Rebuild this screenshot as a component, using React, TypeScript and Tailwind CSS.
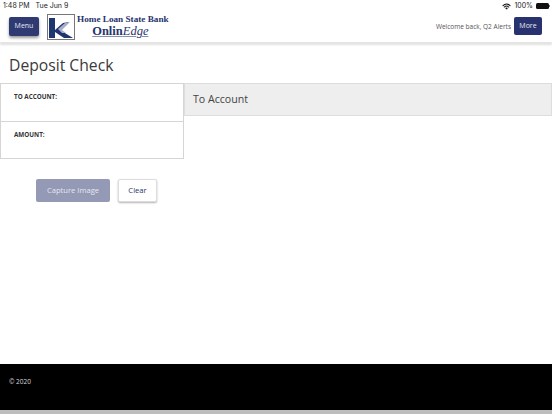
export default function App() {
  return (
    <div className="w-[552px] h-[414px] flex flex-col bg-white overflow-hidden text-[#333] font-['Open_Sans',sans-serif]">
      <div className="h-[11px] shrink-0 flex items-center justify-between pl-[3px] pr-[2px] pt-[1px] text-[7px] leading-[10px] text-[#222] font-['Inter',sans-serif]">
        <div className="flex gap-[6px]"><span>1:48 PM</span><span>Tue Jun 9</span></div>
        <div className="flex items-center gap-[2px]">
          <svg width="9" height="7" viewBox="0 0 20 16" fill="none" stroke="#111" strokeLinecap="round">
            <path d="M2 6 C6.5 1.5 13.5 1.5 18 6" strokeWidth="2.4" />
            <path d="M5 9.2 C8 6.5 12 6.5 15 9.2" strokeWidth="2.4" />
            <path d="M10 14 L7.8 11.8 C9 10.8 11 10.8 12.2 11.8 Z" fill="#111" strokeWidth="1" />
          </svg>
          <span className="ml-[1px]">100%</span>
          <div className="w-[13px] h-[6px] rounded-[1.5px] bg-[#111] ml-[1px]" />
          <div className="w-[1px] h-[2px] bg-[#777] -ml-[2px]" />
        </div>
      </div>
      <header className="h-[32px] shrink-0 flex items-center justify-between pl-[9px] pr-[10px] shadow-[0_2px_2px_rgba(0,0,0,0.12)] border-b border-[#e6e6e6] relative">
        <div className="flex items-center">
          <button className="w-[30px] h-[19px] rounded-[2px] bg-[#2f3a72] text-[#e8e9f2] text-[7px] shadow-[0_2px_3px_rgba(0,0,0,0.4)]">Menu</button>
          <div className="ml-[8px] w-[28px] h-[26px] border border-[#777] bg-white flex items-center justify-center">
            <svg width="26" height="24" viewBox="0 0 26 24">
              <rect x="1" y="3" width="6" height="20" fill="#1f3570" />
              <path d="M7 15 L15 8 L21 7 L12 15 L25 23 L16 23 L7 17 Z" fill="#1f3570" />
              <path d="M10 14 L17 8 L22 7 L14 15 L18 18 L14 18 Z" fill="#a8adc8" />
            </svg>
          </div>
          <div className="ml-[2px] flex flex-col items-center font-['Liberation_Serif',serif] text-[#27346c] -mt-[3px]">
            <span className="text-[9.2px] leading-[12px] font-bold whitespace-nowrap">Home Loan State Bank</span>
            <span className="text-[12.5px] leading-[13px] font-bold whitespace-nowrap -ml-[5px] underline decoration-[#8890b0] decoration-[0.5px]">Onlin<span className="italic font-normal">Edge</span></span>
          </div>
        </div>
        <div className="flex items-center gap-[3px]">
          <span className="text-[6.5px] text-[#555]">Welcome back, Q2 Alerts</span>
          <button className="w-[28px] h-[18px] -mt-[1px] rounded-[2px] bg-[#27326e] text-[#e8e9f2] text-[7px]">More</button>
        </div>
      </header>
      <main className="flex-1 min-h-0 flex flex-col">
        <h1 className="pl-[9px] mt-[10px] text-[15.7px] leading-[24px] text-[#3a3a3a]">Deposit Check</h1>
        <div className="mt-[6px] flex items-start">
          <div className="w-[184px] shrink-0">
            <div className="h-[39px] border border-[#d5d5d5] px-[13px] pt-[7.5px] text-[6.3px] leading-[10px] font-bold text-[#333]">TO ACCOUNT:</div>
            <div className="h-[38px] -mt-[1px] border border-[#d5d5d5] px-[13px] pt-[7.5px] text-[6.3px] leading-[10px] font-bold text-[#333]">AMOUNT:</div>
          </div>
          <div className="flex-1 h-[33px] bg-[#eeeeee] border border-[#dddddd] flex items-center pl-[8px] text-[10.6px] text-[#444]">To Account</div>
        </div>
        <div className="mt-[20px] pl-[36px] flex gap-[8px]">
          <button className="w-[74px] h-[23px] rounded-[2px] bg-[#9499b6] text-[#e6e7ef] text-[7.6px]">Capture Image</button>
          <button className="w-[39px] h-[23px] rounded-[2px] bg-white border border-[#ddd] shadow-[0_1px_2px_rgba(0,0,0,0.3)] text-[#27326e] text-[7.6px]">Clear</button>
        </div>
      </main>
      <footer className="h-[46px] shrink-0 bg-black pl-[9px] pt-[13px] text-[6.5px] leading-[10px] text-[#d8d8d8]">© 2020</footer>
      <div className="h-[4px] shrink-0 bg-[#bdbdbd]" />
    </div>
  );
}
